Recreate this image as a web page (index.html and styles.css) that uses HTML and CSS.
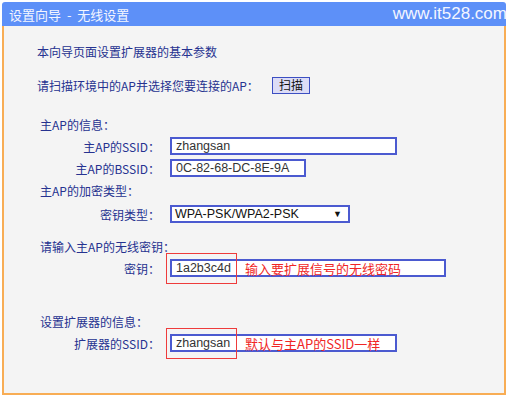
FILE: index.html
```html
<!DOCTYPE html>
<html lang="zh-cn">
<head>
    <meta charset="UTF-8">
    <title>设置向导 - 无线设置</title>
    <link rel="stylesheet" href="styles.css">
</head>
<body>
    <div class="window">
        <div class="title">
            <span class="title-text">设置向导 <span class="dash">-</span> 无线设置</span>
            <span class="site">www.it528.com</span>
        </div>
        <div class="panel">
            <div class="row intro">本向导页面设置扩展器的基本参数</div>

            <div class="row scan">
                <span class="scan-label">请扫描环境中的AP并选择您要连接的AP：</span>
                <button class="btn">扫描</button>
            </div>

            <div class="row head gap-lg">主AP的信息：</div>
            <div class="row field">
                <span class="label">主AP的SSID：</span>
                <span class="box w-wide">zhangsan</span>
            </div>
            <div class="row field">
                <span class="label">主AP的BSSID：</span>
                <span class="box w-mid">0C-82-68-DC-8E-9A</span>
            </div>
            <div class="row head">主AP的加密类型：</div>
            <div class="row field gap-sm">
                <span class="label">密钥类型：</span>
                <span class="box w-select">WPA-PSK/WPA2-PSK<span class="arrow">▼</span></span>
            </div>

            <div class="row head gap-md">请输入主AP的无线密钥：</div>
            <div class="row field">
                <span class="label">密钥：</span>
                <span class="box w-key">
                    <span class="value mark">1a2b3c4d</span>
                    <span class="note">输入要扩展信号的无线密码</span>
                </span>
            </div>

            <div class="row head gap-xl">设置扩展器的信息：</div>
            <div class="row field">
                <span class="label">扩展器的SSID：</span>
                <span class="box w-wide">
                    <span class="value mark">zhangsan</span>
                    <span class="note">默认与主AP的SSID一样</span>
                </span>
            </div>
        </div>
    </div>
</body>
</html>
```

FILE: styles.css
```css
* {
    box-sizing: border-box;
    margin: 0;
    padding: 0;
}

body {
    width: 510px;
    height: 396px;
    background-color: #ffffff;
    font-family: "Noto Sans CJK SC", "Liberation Sans", sans-serif;
    font-size: 12px;
    overflow: hidden;
}

.window {
    width: 504px;
    margin: 2px 0 0 2px;
}

.title {
    height: 24px;
    display: flex;
    align-items: center;
    justify-content: space-between;
    background-color: #5d90f8;
    border-radius: 3px 3px 0 0;
    color: #f4f6ff;
    padding-left: 7px;
}

.title-text {
    font-size: 13px;
}

.dash {
    margin: 0 3px;
}

.site {
    font-family: "Liberation Sans", sans-serif;
    font-size: 17px;
    margin-right: -1px;
}

.panel {
    height: 369px;
    background-color: #f4f4f4;
    border: 2px solid #f8ad55;
    border-top: none;
    padding: 15px 0 0 33px;
    color: #263290;
}

.row {
    display: flex;
    align-items: center;
    height: 20px;
    margin-top: 2px;
}

.intro {
    margin-top: 0;
}

.scan {
    margin-top: 14px;
}

.scan-label {
    width: 235px;
}

.btn {
    width: 38px;
    height: 17px;
    background-color: #dcdcf6;
    border: 1px solid #3c4fc2;
    font-family: "Noto Sans CJK SC", sans-serif;
    font-size: 12px;
    color: #111111;
    line-height: 14px;
}

.head {
    padding-left: 3px;
}

.gap-sm {
    margin-top: 4px;
}

.gap-md {
    margin-top: 12px;
}

.gap-lg {
    margin-top: 19px;
}

.gap-xl {
    margin-top: 33px;
}

.label {
    width: 123px;
    text-align: right;
    margin-right: 10px;
}

.box {
    position: relative;
    display: flex;
    align-items: center;
    height: 18px;
    border: 2px solid #4b5ad0;
    background-color: #ffffff;
    padding-left: 4px;
    font-family: "Liberation Sans", sans-serif;
    font-size: 12.5px;
    color: #333333;
}

.w-wide {
    width: 227px;
}

.w-mid {
    width: 136px;
}

.w-select {
    width: 180px;
    padding-left: 3px;
    color: #111111;
}

.w-key {
    width: 276px;
}

.arrow {
    margin-left: auto;
    margin-right: 6px;
    font-size: 9px;
}

.value {
    position: relative;
    width: 65px;
}

.mark::after {
    content: "";
    position: absolute;
    left: -10px;
    top: -8px;
    width: 69px;
    height: 29px;
    border: 1px solid #ee3b3b;
}

.note {
    font-family: "Noto Sans CJK SC", sans-serif;
    font-size: 13px;
    color: #f02626;
    margin-left: 4px;
}
```
